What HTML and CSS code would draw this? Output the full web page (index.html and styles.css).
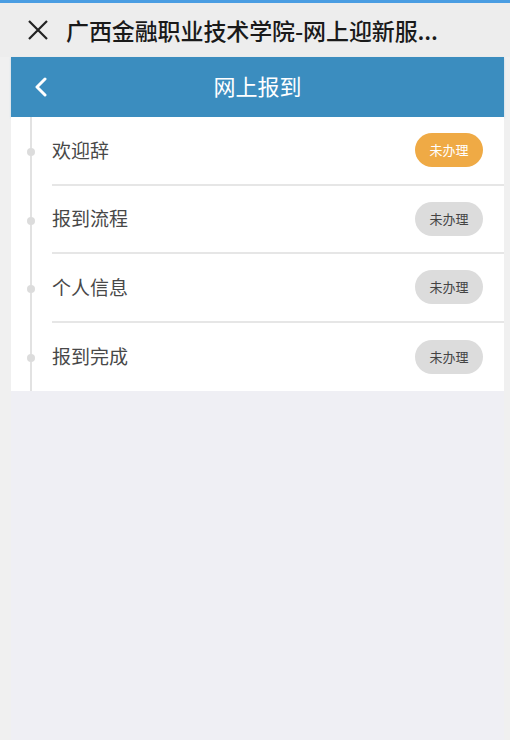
FILE: index.html
```html
<!DOCTYPE html>
<html lang="zh-CN">
<head>
    <meta charset="UTF-8">
    <meta name="viewport" content="width=device-width, initial-scale=1.0">
    <title>网上报到</title>
    <link rel="stylesheet" href="styles.css">
</head>
<body>
    <div class="topline"></div>
    <div class="titlebar">
        <svg class="close" width="22" height="22" viewBox="0 0 22 22">
            <path d="M2 2 L20 20 M20 2 L2 20" stroke="#222" stroke-width="2.2" fill="none"/>
        </svg>
        <span class="apptitle">广西金融职业技术学院-网上迎新服...</span>
    </div>

    <div class="page">
        <header class="navbar">
            <svg class="back" width="14" height="20" viewBox="0 0 14 20">
                <path d="M11 2 L3 10 L11 18" stroke="#fff" stroke-width="3" fill="none" stroke-linecap="round" stroke-linejoin="round"/>
            </svg>
            <h1>网上报到</h1>
        </header>

        <ul class="steps">
            <li class="step">
                <span class="dot"></span>
                <div class="step-body">
                    <span class="step-name">欢迎辞</span>
                    <span class="badge badge-active">未办理</span>
                </div>
            </li>
            <li class="step">
                <span class="dot"></span>
                <div class="step-body">
                    <span class="step-name">报到流程</span>
                    <span class="badge">未办理</span>
                </div>
            </li>
            <li class="step">
                <span class="dot"></span>
                <div class="step-body">
                    <span class="step-name">个人信息</span>
                    <span class="badge">未办理</span>
                </div>
            </li>
            <li class="step">
                <span class="dot"></span>
                <div class="step-body last">
                    <span class="step-name">报到完成</span>
                    <span class="badge">未办理</span>
                </div>
            </li>
        </ul>
    </div>
</body>
</html>
```

FILE: styles.css
```css
html, body {
    margin: 0;
    padding: 0;
}

body {
    width: 510px;
    height: 740px;
    background-color: #f0f0f0;
    font-family: "Noto Sans CJK SC", "Noto Sans", sans-serif;
    overflow: hidden;
}

.topline {
    height: 3px;
    background-color: #4a9de2;
}

.titlebar {
    height: 54px;
    display: flex;
    align-items: center;
    background-color: #ededed;
    padding-left: 27px;
}

.close {
    flex: none;
}

.apptitle {
    margin-left: 17px;
    font-size: 23px;
    font-weight: 500;
    color: #1a1a1a;
    letter-spacing: -0.1px;
}

.page {
    margin-left: 11px;
    width: 493px;
    height: 683px;
    background-color: #efeff4;
}

.navbar {
    height: 60px;
    background-color: #3b8dbf;
    display: flex;
    align-items: center;
    justify-content: center;
    position: relative;
    box-shadow: 0 1px 2px rgba(60, 140, 200, 0.3);
}

.back {
    position: absolute;
    left: 23px;
    top: 20px;
}

.navbar h1 {
    margin: 0 0 4px;
    font-size: 22px;
    font-weight: 400;
    color: #fff;
}

.steps {
    list-style: none;
    margin: 0;
    padding: 0;
    background-color: #fff;
    position: relative;
}

.steps::before {
    content: "";
    position: absolute;
    left: 19px;
    top: 0;
    bottom: 0;
    width: 2px;
    background-color: #e2e2e2;
}

.step {
    display: flex;
    align-items: center;
    position: relative;
}

.dot {
    position: absolute;
    left: 16px;
    top: 31px;
    width: 8px;
    height: 8px;
    border-radius: 50%;
    background-color: #dcdcdc;
}

.step-body {
    flex: 1;
    margin-left: 41px;
    height: 66.5px;
    display: flex;
    align-items: center;
    justify-content: space-between;
    border-bottom: 2px solid #e6e6e6;
    padding-right: 21px;
}

.step-body.last {
    border-bottom: none;
    height: 68px;
}

.step-name {
    font-size: 19px;
    color: #484848;
    margin-top: -2px;
}

.badge {
    display: inline-block;
    width: 68px;
    height: 34px;
    line-height: 34px;
    border-radius: 17px;
    text-align: center;
    font-size: 13px;
    color: #444;
    background-color: #dcdcdc;
}

.badge-active {
    background-color: #efaa45;
    color: #fff;
}
```
